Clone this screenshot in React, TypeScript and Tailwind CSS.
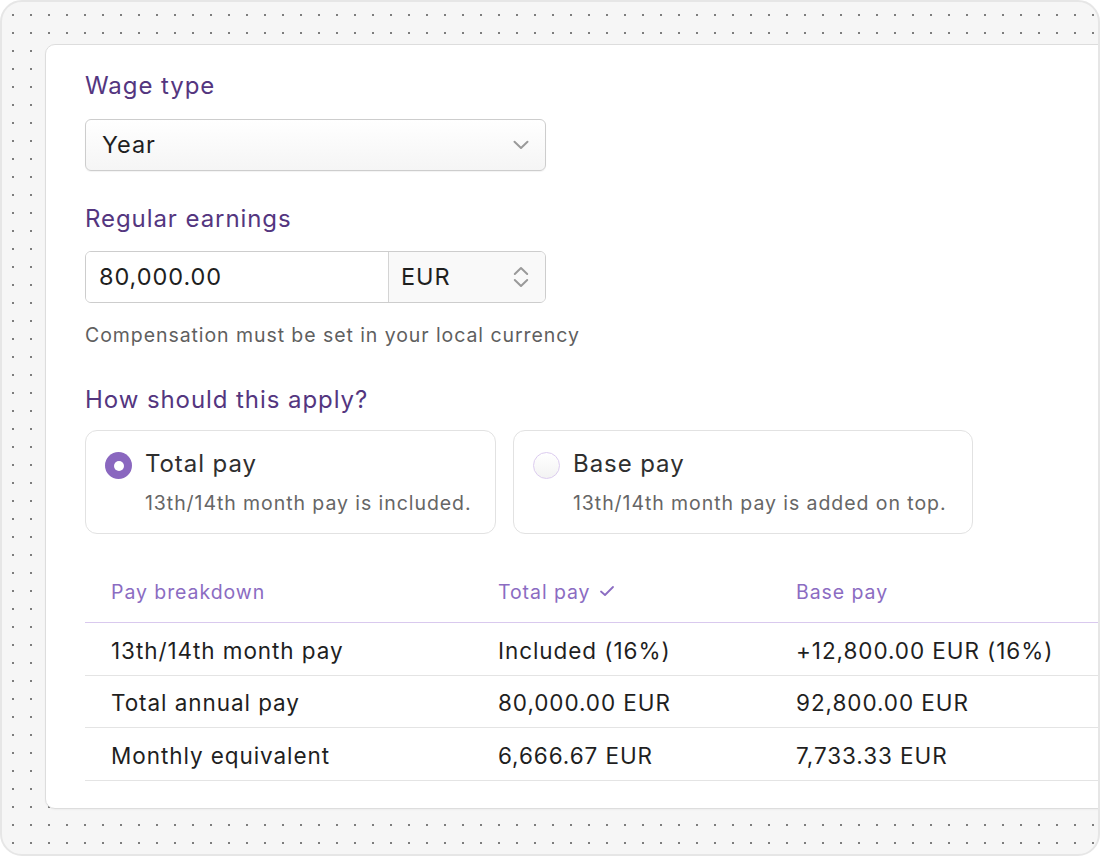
import React from "react";

const font = { fontFamily: "Inter, 'Noto Sans', sans-serif" };

function ChevronDown() {
  return (
    <svg width="16" height="10" viewBox="0 0 16 10" fill="none">
      <path d="M1.5 1.8 L8 8 L14.5 1.8" stroke="#9a9a9a" strokeWidth="2" strokeLinecap="round" strokeLinejoin="round" />
    </svg>
  );
}

function ChevronsUpDown() {
  return (
    <svg width="16" height="22" viewBox="0 0 16 22" fill="none">
      <path d="M1.8 8 L8 2 L14.2 8" stroke="#9a9a9a" strokeWidth="2" strokeLinecap="round" strokeLinejoin="round" />
      <path d="M1.8 14 L8 20 L14.2 14" stroke="#9a9a9a" strokeWidth="2" strokeLinecap="round" strokeLinejoin="round" />
    </svg>
  );
}

function RadioCard({ selected, title, sub, width }: { selected: boolean; title: string; sub: string; width: string }) {
  return (
    <div className={`${width} h-[104px] rounded-[12px] border border-[#e2e2e2] bg-white flex pl-[19px] pt-[18px]`}>
      <div className="pt-[3px]">
        {selected ? (
          <div className="w-[27px] h-[27px] rounded-full bg-[#8a67bf] flex items-center justify-center">
            <div className="w-[10px] h-[10px] rounded-full bg-white" />
          </div>
        ) : (
          <div className="w-[27px] h-[27px] rounded-full border-[1.5px] border-[#dcccef] bg-gradient-to-b from-white to-[#f3f3f3]" />
        )}
      </div>
      <div className="ml-[13px] flex flex-col">
        <div className="text-[24px] leading-[30px] text-[#2f2f2f]">{title}</div>
        <div className="mt-[11px] text-[19.5px] leading-[26px] text-[#666666]">{sub}</div>
      </div>
    </div>
  );
}

function Check() {
  return (
    <svg width="16" height="12" viewBox="0 0 16 12" fill="none" className="inline-block ml-[8px] mb-[2px]">
      <path d="M2 6.5 L6 10 L14 2" stroke="#8b6cc2" strokeWidth="1.8" strokeLinecap="round" strokeLinejoin="round" />
    </svg>
  );
}

export default function App() {
  const rows = [
    ["13th/14th month pay", "Included (16%)", "+12,800.00 EUR (16%)"],
    ["Total annual pay", "80,000.00 EUR", "92,800.00 EUR"],
    ["Monthly equivalent", "6,666.67 EUR", "7,733.33 EUR"],
  ];
  return (
    <div className="w-[1100px] h-[856px] bg-white tracking-[0.058em]" style={font}>
      <div className="w-[1100px] h-[856px] rounded-[22px] border-2 border-[#e6e6e6] overflow-hidden bg-[#f6f6f6] bg-[radial-gradient(circle,#7d7d7d_0.9px,transparent_1.3px)] bg-[size:18px_18px] bg-[position:2px_4px] pl-[43px] pt-[42px]">
        <div className="w-[1100px] h-[765px] bg-white border border-[#dddddd] rounded-l-[10px] shadow-[0_1px_2px_rgba(0,0,0,0.04)] pl-[39px] pt-[25px]">
          <div className="text-[24px] leading-[32px] text-[#54367f]">Wage type</div>
          <div className="mt-[17px] w-[461px] h-[52px] rounded-[6px] border border-[#cdcdcd] bg-gradient-to-b from-white to-[#f5f5f5] flex items-center justify-between pl-[16px] pr-[16px] shadow-[0_1px_1px_rgba(0,0,0,0.05)]">
            <span className="text-[23.5px] text-[#1f1f1f]">Year</span>
            <ChevronDown />
          </div>

          <div className="mt-[32px] text-[24px] leading-[32px] text-[#54367f]">Regular earnings</div>
          <div className="mt-[16px] w-[461px] h-[52px] rounded-[6px] border border-[#cdcdcd] flex overflow-hidden">
            <div className="w-[303px] bg-white flex items-center pl-[13px] text-[23.5px] text-[#1f1f1f] border-r border-[#d4d4d4]">
              80,000.00
            </div>
            <div className="flex-1 bg-[#f9f9f9] flex items-center justify-between pl-[12px] pr-[16px] text-[23.5px] text-[#1f1f1f]">
              <span>EUR</span>
              <ChevronsUpDown />
            </div>
          </div>
          <div className="mt-[19px] text-[19.5px] leading-[26px] text-[#5f5f5f]">Compensation must be set in your local currency</div>

          <div className="mt-[36px] text-[24px] leading-[32px] text-[#54367f]">How should this apply?</div>
          <div className="mt-[14px] flex gap-[17px]">
            <RadioCard selected title="Total pay" sub="13th/14th month pay is included." width="w-[411px]" />
            <RadioCard selected={false} title="Base pay" sub="13th/14th month pay is added on top." width="w-[460px]" />
          </div>

          <div className="mt-[44px]">
            <div className="grid grid-cols-[387px_298px_1fr] border-b border-[#d9c9ee] pb-[16px] text-[19.5px] leading-[28px] text-[#8b6cc2]">
              <div className="pl-[26px]">Pay breakdown</div>
              <div className="pl-[26px] flex items-center">Total pay<Check /></div>
              <div className="pl-[26px]">Base pay</div>
            </div>
            {rows.map((r) => (
              <div key={r[0]} className="grid grid-cols-[387px_298px_1fr] h-[52.5px] pt-[4px] items-center border-b border-[#e4e4e4] text-[22.5px] text-[#1f1f1f]">
                <div className="pl-[26px]">{r[0]}</div>
                <div className="pl-[26px]">{r[1]}</div>
                <div className="pl-[26px]">{r[2]}</div>
              </div>
            ))}
          </div>
        </div>
      </div>
    </div>
  );
}
